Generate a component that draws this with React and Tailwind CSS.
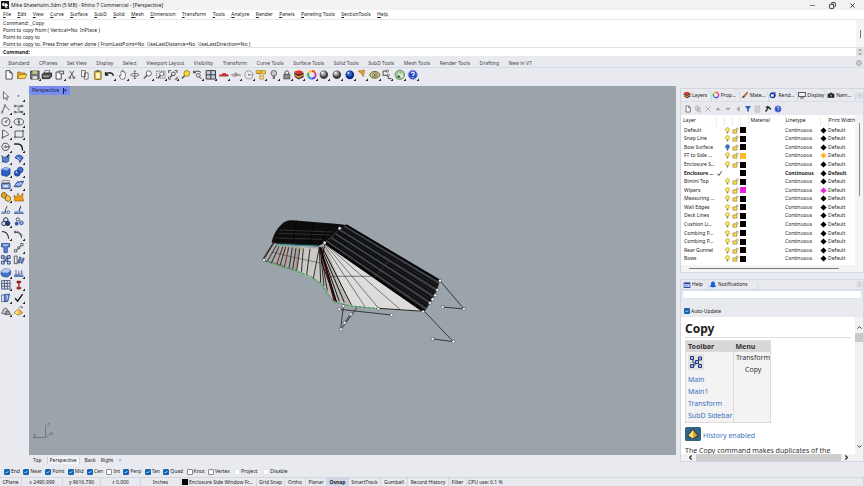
import React, { useState } from 'react';
import { Minus, Copy, X, ChevronUp, ChevronDown, ChevronLeft, ChevronRight, Settings } from 'lucide-react';

const menus = ['File', 'Edit', 'View', 'Curve', 'Surface', 'SubD', 'Solid', 'Mesh', 'Dimension', 'Transform', 'Tools', 'Analyze', 'Render', 'Panels', 'Paneling Tools', 'SectionTools', 'Help'];

const toolTabs = ['Standard', 'CPlanes', 'Set View', 'Display', 'Select', 'Viewport Layout', 'Visibility', 'Transform', 'Curve Tools', 'Surface Tools', 'Solid Tools', 'SubD Tools', 'Mesh Tools', 'Render Tools', 'Drafting', 'New in V7'];

const history = [
  'Command: _Copy',
  'Point to copy from ( Vertical=No  InPlace )',
  'Point to copy to',
  'Point to copy to. Press Enter when done ( FromLastPoint=No  UseLastDistance=No  UseLastDirection=No )',
];

const layers = [
  { name: 'Default' },
  { name: 'Snap Line' },
  { name: 'Bow Surface', off: true },
  { name: 'FT to Side ...', color: '#fbb829' },
  { name: 'Enclosure S...' },
  { name: 'Enclosure ...', current: true },
  { name: 'Bimini Top' },
  { name: 'Wipers', color: '#e81ee0' },
  { name: 'Measuring ...' },
  { name: 'Wall Edges' },
  { name: 'Deck Lines' },
  { name: 'Cushion Li...' },
  { name: 'Combing P...' },
  { name: 'Combing P...' },
  { name: 'Rear Gunnel' },
  { name: 'Bows' },
];

const osnaps = [
  ['End', true], ['Near', true], ['Point', true], ['Mid', true], ['Cen', true], ['Int', false],
  ['Perp', true], ['Tan', true], ['Quad', true], ['Knot', false], ['Vertex', false],
];

// 12x12 glyphs used by the toolbars and the panels
const glyphs = {
  page: <path d="M3 1.5h4l2.5 2.5v6.5H3zM7 1.5V4h2.5" fill="#fff" stroke="#333" strokeWidth=".9" />,
  open: <><path d="M1.5 10V3h3l1 1h4v2" fill="#e9a820" stroke="#80600c" strokeWidth=".7" /><path d="M1.5 10l2-4.5h8L9.3 10z" fill="#ffd34d" stroke="#80600c" strokeWidth=".7" /></>,
  save: <><path d="M1.5 2h9v8.5h-9z" fill="#777b78" stroke="#222" strokeWidth=".8" /><path d="M3.5 2h5v3h-5z" fill="#c9c57d" /><path d="M3.5 7.5h5v3h-5z" fill="#ddd" /></>,
  print: <><path d="M4 1.5h5L8 5H3z" fill="#fff" stroke="#333" strokeWidth=".7" /><path d="M1 5.5L3 4h8v4l-2 2H1z" fill="#555" stroke="#111" strokeWidth=".8" /><path d="M2 7.5h6" stroke="#ccc" /></>,
  props: <><path d="M2 3h5.5v7.5H2z" fill="#fff" stroke="#333" strokeWidth=".9" /><path d="M5 2h5v3H7.5L5 4z" fill="#ddd" stroke="#333" strokeWidth=".8" /></>,
  cut: <g stroke="#444" strokeWidth=".9" fill="none"><path d="M4 2l3.8 6.5M8 2L4.2 8.5" /><circle cx="3.8" cy="9" r="1" /><circle cx="8.2" cy="9" r="1" /></g>,
  copy: <g fill="#fff" stroke="#444" strokeWidth=".8"><path d="M2.5 1.5h4v6.5h-4zM5.5 4h4v6.5h-4z" /></g>,
  paste: <><rect x="2.5" y="2" width="7" height="9" rx="1" fill="#e4bb3b" stroke="#6a551b" strokeWidth=".8" /><path d="M4.2 4h3.8v5.5H4.2z" fill="#fff8cc" /><path d="M4.5 1h3v1.8h-3z" fill="#555" /></>,
  undo: <path d="M1.5 5.5C4 3 8.5 3 10 7M1.5 3v3.2h3" fill="none" stroke="#222" strokeWidth="1.5" />,
  hand: <path d="M4 10.5L2 7l1-.6L4 7.5V3c0-1 1-1 1 0V1.8c0-1 1.2-1 1.2 0v1c0-1 1.2-1 1.2 0v1c0-.9 1.2-.9 1.2 0V8l-1 2.5z" fill="#fff" stroke="#444" strokeWidth=".7" />,
  orbit: <g fill="none" stroke="#555" strokeWidth=".8"><path d="M6 1.5v9M4.8 2.8L6 1.5l1.2 1.3M4.8 9.2L6 10.5l1.2-1.3" /><ellipse cx="6" cy="6" rx="4.5" ry="1.5" /></g>,
  zoom: <g fill="none" stroke="#555" strokeWidth=".9"><circle cx="7" cy="4.5" r="2.8" fill="#f5f6ff" /><path d="M5 6.5L1.8 10" strokeWidth="1.4" /></g>,
  zoomWin: <g fill="none" stroke="#444" strokeWidth=".8"><path d="M1.5 2h9v7.5h-9z" strokeDasharray="1.3 1" /><circle cx="7" cy="5" r="2.2" fill="#fff" /><path d="M5.5 6.7L3 9.5" strokeWidth="1.3" /></g>,
  zoomExt: <g fill="none" stroke="#333" strokeWidth=".9"><path d="M1.5 4V1.5H4M8 1.5h2.5V4M10.5 8v2.5H8M4 10.5H1.5V8" /><circle cx="6.5" cy="5" r="2" /><path d="M5 6.5L3 8.7" strokeWidth="1.3" /></g>,
  zoomSel: <><circle cx="7" cy="4.5" r="3.1" fill="#f6dc35" stroke="#7a7120" strokeWidth=".8" /><path d="M4.7 7L1.8 10" stroke="#555" strokeWidth="1.5" /></>,
  viewUndo: <g fill="none" stroke="#333"><path d="M1.5 3.5c2-2 6-2 8 0M1.5 1.5v2.3h2.5" /><circle cx="6.5" cy="6.5" r="2" strokeWidth=".8" /><path d="M7.5 8l2.5 2.5" /></g>,
  four: <><path d="M1 1.5h10v9H1z" fill="#c7cdd8" stroke="#222" strokeWidth=".9" /><path d="M6 1.5v9M1 6h10" stroke="#222" strokeWidth=".9" /></>,
  car: <><path d="M.8 7c0-1.5 2-1.5 3-1.7C5 3.5 8 3.5 9 5.3c1.2.1 2.2.4 2.2 1.7z" fill="#dd2929" /><path d="M1 7.2h10" stroke="#6d1010" strokeWidth=".8" /></>,
  plane: <><path d="M1 6l4-1.2 1-1.5 1 1.5 4 1.2v1l-4-.2-2 1.5z" fill="#b7b7bb" stroke="#777" strokeWidth=".5" /><circle cx="6.5" cy="5.8" r=".9" fill="#cc4444" /></>,
  circle: <g fill="none" stroke="#777" strokeWidth=".7"><circle cx="6" cy="6" r="4.3" /><path d="M6 6h4.3" /><circle cx="6" cy="6" r=".6" fill="#777" /></g>,
  sheets: <><path d="M1 1.5h5v3H1zM6.5 1.5H11V5H6.5z" fill="#ffc928" stroke="#8a6b15" strokeWidth=".6" /><path d="M5 7h4v3.5H5z" fill="#ffe07a" stroke="#8a6b15" strokeWidth=".6" /><path d="M2 3.5l3 2.5" stroke="#b3482c" strokeWidth=".8" /></>,
  bulb: <><circle cx="6" cy="4.3" r="3" fill="#c9cacc" stroke="#4c4c4c" strokeWidth=".8" /><path d="M4.8 7.3h2.4v3H4.8z" fill="#666" /></>,
  lock: <><path d="M4 5.5V3.8c0-2.6 4-2.6 4 0v1.7" fill="none" stroke="#444" /><path d="M2.8 5.5h6.4v4.8H2.8z" fill="#8b8d90" stroke="#333" strokeWidth=".7" /></>,
  layers: <><path d="M1 3l4.5 2.2L11 3.5v5L5.5 11 1.5 8z" fill="#3c2c47" /><path d="M1 5l4.5 2.5L11 5.3v1.5L5.5 9.5 1.2 6.5z" fill="#f29b2d" /><path d="M1 2.3L7 1l4 2-5 3z" fill="#e2371f" /></>,
  wheel: <g fill="none" strokeWidth="2.2"><path d="M6 2a4 4 0 0 1 3.5 2" stroke="#f04a34" /><path d="M9.5 4a4 4 0 0 1 0 4" stroke="#e43ca4" /><path d="M9.5 8A4 4 0 0 1 6 10" stroke="#743ae0" /><path d="M6 10a4 4 0 0 1-3.5-2" stroke="#2196e0" /><path d="M2.5 8a4 4 0 0 1 0-4" stroke="#36b54a" /><path d="M2.5 4A4 4 0 0 1 6 2" stroke="#f6c623" /></g>,
  sphere: <><circle cx="6" cy="6" r="4.5" fill="#3f4142" /><circle cx="5.3" cy="4.6" r="2.9" fill="#999" /><circle cx="4.7" cy="4" r="1.3" fill="#f4f4f4" /></>,
  blueSphere: <><circle cx="6" cy="6" r="4.6" fill="#0d2b84" /><circle cx="5.3" cy="4.8" r="2.9" fill="#2f63c8" /><circle cx="4.5" cy="4" r="1.1" fill="#d9e8ff" /></>,
  cone: <path d="M2 2l7-1-1.5 7-2-3.5z" fill="#f49b28" stroke="#8d5512" strokeWidth=".5" />,
  eye: <><ellipse cx="6" cy="6" rx="5.2" ry="3.6" fill="#d9c96c" stroke="#55501c" strokeWidth=".9" /><circle cx="6" cy="6" r="2.2" fill="#fff" stroke="#333" strokeWidth=".7" /><circle cx="6" cy="6" r=".9" /></>,
  flow: <g fill="none" stroke="#333" strokeWidth=".9"><path d="M6 2H2v4.5h5.5V10H11" /><path d="M5.5 1h2v2h-2zM6.5 5.5h2v2h-2z" fill="#fff" strokeWidth=".6" /></g>,
  globe: <><circle cx="6" cy="6" r="5" fill="#9cc78f" stroke="#4b6e48" strokeWidth=".7" /><path d="M2 9l3-6 1.5 3L9 3.5 9.5 9z" fill="#dbe9d3" /><path d="M2 9l3-3 2 3z" fill="#3c5b3a" /></>,
  help: <><circle cx="6" cy="6" r="4.8" fill="#2d4dc6" stroke="#8295dd" strokeWidth=".8" /><path d="M4.5 4.7c0-2.2 3.3-2 3.1 0C7.5 6 6 5.8 6 7.3M6 8.4v1" fill="none" stroke="#fff" strokeWidth="1.1" /></>,

  pointer: <path d="M3.5 1.5v7.8l1.9-1.6 1.3 2.8 1.2-.6-1.3-2.6H9z" fill="#fff" stroke="#333" strokeWidth=".7" />,
  point: <circle cx="5.5" cy="6" r="1" fill="#777" />,
  polyline: <g fill="none" stroke="#333" strokeWidth=".8"><path d="M2 10L5 2.5l5 5" /><path d="M1.3 9h1.6v1.6H1.3zM4.2 1.5h1.6v1.6H4.2z" fill="#fff" strokeWidth=".5" /></g>,
  ctrl: <g fill="none" stroke="#333" strokeWidth=".7"><path d="M2 3h7.5C4 4 4 8 9.5 9.5H2" /><path d="M1.2 2.2h1.6v1.6H1.2zM8.7 2.2h1.6v1.6H8.7zM1.2 8.7h1.6v1.6H1.2zM8.7 8.7h1.6v1.6H8.7z" fill="#fff" /></g>,
  radius: <g fill="none" stroke="#333" strokeWidth=".8"><circle cx="6" cy="6" r="4.3" /><path d="M6 6l3-3" /><circle cx="6" cy="6" r=".7" fill="#fff" /></g>,
  ellipse: <g fill="none" stroke="#333" strokeWidth=".8"><ellipse cx="6" cy="6" rx="5" ry="3.4" /><path d="M6 2.6v6.8" /><circle cx="6" cy="6" r=".8" fill="#fff" /></g>,
  arc: <g fill="none" stroke="#333" strokeWidth=".8"><path d="M2.5 2c5 1 6 4 6.5 5L2.5 10z" /><circle cx="2.5" cy="10" r=".8" fill="#fff" /></g>,
  rect: <g fill="none" stroke="#333" strokeWidth=".8"><path d="M2 3h8.5v6.5H2z" /><path d="M1.2 8.8h1.5v1.5H1.2zM9.8 2.2h1.5v1.5H9.8z" fill="#fff" strokeWidth=".6" /></g>,
  polygon: <g fill="none" stroke="#333" strokeWidth=".8"><path d="M3.5 2.3h4L10 6 7.5 9.7h-4L1.5 6z" /><circle cx="5.7" cy="6" r="1" /><path d="M6.7 6H10" /></g>,
  fillet: <path d="M1 3h3.5C8 3 10 5 10 10" fill="none" stroke="#222" strokeWidth="1.5" />,
  surf: <><path d="M2 3.5l3 1 4.5-3L9 8.5 6.5 10 2.5 9z" fill="#5680d4" stroke="#20386f" strokeWidth=".7" /><path d="M1 2l2 2M9 1l-2 4M2 10l2-2" stroke="#222" strokeWidth=".7" /></>,
  loft: <><path d="M2 5c1-4 7-4 8.5 0L7 10C7 7 5 6 2 5z" fill="#4f7bd5" stroke="#20386f" strokeWidth=".8" /><path d="M4.5 4.5L7 7" stroke="#e5eeff" /></>,
  box: <><path d="M1.5 3.5L5 1.5l5.5 1v6L7 11l-5.5-1.5z" fill="#2860c8" stroke="#12326f" strokeWidth=".6" /><path d="M1.5 3.5L5 1.5l5.5 1L7 4.5z" fill="#93b6f2" /></>,
  balls: <><circle cx="7.5" cy="4" r="3" fill="#3f70cf" stroke="#142f6e" strokeWidth=".7" /><circle cx="4.3" cy="7.4" r="3.2" fill="#2659ba" stroke="#142f6e" strokeWidth=".7" /><circle cx="3.5" cy="6.4" r="1" fill="#bcd1fb" /></>,
  drum: <><ellipse cx="6" cy="2.5" rx="4.5" ry="1.3" fill="none" stroke="#444" strokeWidth=".6" /><path d="M1.5 4.5h9v5.5h-9z" fill="#80a0df" stroke="#20386f" strokeWidth=".8" /><path d="M3.5 6.5h5v2h-5z" fill="#e1eafd" /></>,
  sheet: <><path d="M1 8l3-5 7-1-3 6z" fill="#5a82d2" stroke="#20386f" strokeWidth=".8" /><path d="M4 3.5l2.5 4M7 2.5l1.5 4M2.5 6l7-1.5" stroke="#dbe6ff" strokeWidth=".7" /></>,
  bool: <><path d="M1.5 2.5L4 1l3 2v3L4.5 7.5 1.5 6z" fill="#e3a51d" stroke="#6d4e0d" strokeWidth=".8" /><path d="M5.5 6L8 4.5l3 2v3L8.5 11l-3-1.5z" fill="#ffc744" stroke="#6d4e0d" strokeWidth=".8" /></>,
  burst: <path d="M1.5 10.5L1 4l2.5 3L5 2l1.5 4L10.5 2 10 6l1 4.5z" fill="#f59c15" stroke="#8a520a" strokeWidth=".6" />,
  trim: <><path d="M1 9.5h4.5V6l2-4" fill="none" stroke="#333" strokeWidth=".9" /><path d="M2 7.5h3v2H2z" fill="#7c9be0" /><circle cx="8.5" cy="8.5" r="1.5" fill="#fff" stroke="#2c50a0" /></>,
  split: <><path d="M1 9.5h10M6 8l2-6" stroke="#244288" strokeWidth="1.2" fill="none" /><path d="M1.5 7.5h4v1.5h-4zM7.5 7.5H10V9H7.5z" fill="#6f93e0" /></>,
  join: <g fill="#dce2ed" stroke="#1c2c54"><circle cx="6" cy="4" r="2.4" /><circle cx="4" cy="7.7" r="2.3" /><circle cx="8" cy="7.7" r="2.3" fill="#27407e" /></g>,
  dots: <g strokeWidth=".8"><circle cx="5" cy="3.5" r="1.8" fill="#dbe2f2" stroke="#333" /><circle cx="3.7" cy="8" r="2" fill="#3158a9" /><circle cx="8.7" cy="7" r="2" fill="#93b0ea" stroke="#20386f" /></g>,
  arcA: <path d="M2 2.5c4 0 6.5 3 7 7.5" fill="none" stroke="#222" strokeWidth="1.2" />,
  arcB: <g fill="none" stroke="#222"><path d="M2 3c4 0 6.5 3 7 6" strokeWidth="1.1" /><path d="M4 1.5l6 5M1.2 2.2h1.6v1.6H1.2z" strokeWidth=".6" /></g>,
  pipe: <><path d="M1.5 1.5h8.5V5H7.5v6H4V5H1.5z" fill="#5f88d7" stroke="#1d3877" strokeWidth=".8" /><path d="M3 3h5.5" stroke="#dbe7ff" /></>,
  nodes: <g fill="#fff" stroke="#333" strokeWidth=".8"><path d="M2.5 9.5l7-7" /><path d="M1.3 8h2.5v2.5H1.3zM8 1.3h2.5v2.5H8zM5 5h2v2H5z" /></g>,
  array: <g fill="#aebfe9" stroke="#1c356e" strokeWidth=".8"><path d="M3 3h4v3H4v3" fill="none" /><path d="M1.3 1.5h3v3h-3zM7.7 1.5h3v3h-3zM1.3 7.5h3v3h-3zM7.7 7.5h3v3h-3zM5.5 5h2.500v2.500H5.500z" /></g>,
  flowAlong: <g strokeWidth=".8" stroke="#333"><path d="M1.2 2h3v8h-3z" fill="#eee" /><path d="M5 9l2-6 1.5.5-2 6zM8 9l2.5-5 1.2.7L9.5 10z" fill="#87a7e8" stroke="#20386f" /></g>,
  solid: <><path d="M1 4.5L4 2h5l2 1.5v4L8 10.5 3 10 1 8z" fill="#3f72cc" stroke="#16336f" strokeWidth=".7" /><path d="M1 4.5L4 2h5l2 1.5L8 6H3z" fill="#b5caef" /></>,
  extrude: <><path d="M1 8.5h10v1.8H1z" fill="#3f6bc5" /><path d="M3 7V3M6 7V4M9 7V3" stroke="#315aa9" strokeWidth=".9" /><path d="M1.5 8l9-1" stroke="#222" strokeWidth=".6" /></>,
  mesh: <path d="M1.5 1.5h9v9h-9zM4.5 1.5v9M7.5 1.5v9M1.5 4.5h9M1.5 7.5h9" fill="none" stroke="#29396a" strokeWidth=".8" />,
  dim: <><path d="M4 2h4v2H4zM4 8.5h4v2H4z" fill="#b42626" stroke="#6b1111" strokeWidth=".6" /><path d="M6 4v4.5" stroke="#c83232" strokeWidth="1.6" /></>,
  cards: <g stroke="#20386f" strokeWidth=".7"><path d="M1.5 3h4v7h-4z" fill="#dfe8fa" /><path d="M4.5 2.5L10 2 8 10H4.5z" fill="#5a83d4" /><path d="M6 4l2-.2L7 8" fill="none" stroke="#fff" /></g>,
  check: <path d="M2 6.5L4.7 9.5 10 2" fill="none" stroke="#111" strokeWidth="1.4" />,
  rocks: <g stroke="#444" strokeWidth=".7"><path d="M1.5 9l2-5 3-1 2 3v3z" fill="#c5c8cd" /><path d="M5 10l1.5-4 3 .5L11 10z" fill="#999da3" /></g>,
  pyramid: <><path d="M1 8L5.5 4 10 8l-4.5 2.5z" fill="#f3b52c" stroke="#7c5708" strokeWidth=".7" /><path d="M5.5 4.3V10L1.5 8z" fill="#ffe08a" /><path d="M6 2.5c1.5-1.5 3-1 4 0M9 1l1 1.7-1.8.5" fill="none" stroke="#555" strokeWidth=".7" /></>,

  cross: <path d="M2 2l8 8M10 2l-8 8" stroke="#a5a7ab" strokeWidth="1.2" />,
  up: <path d="M6 3.5L10.5 8h-9z" fill="#a5a7ab" />,
  down: <path d="M6 8.5L10.5 4h-9z" fill="#a5a7ab" />,
  left: <path d="M3.5 6L8.5 1.5v9z" fill="#a5a7ab" />,
  funnel: <path d="M1.5 1.5h9L7.2 6v4.8L4.8 9V6z" fill="#2860ba" />,
  newSub: <g fill="#dfe0e2" stroke="#999" strokeWidth=".8"><path d="M2.5 1.5h4v6.5h-4zM5.5 4h4v6.5h-4z" /></g>,
  hammer: <path d="M1.5 3.5L5.5 1l3 1.5 2.5 4-1.5 1L7 5 3.5 10.5 1.5 9.5 4.5 4.5z" fill="#333" />,
  list: <><path d="M2 1.5h6.5v9H2z" fill="#eee" stroke="#999" strokeWidth=".8" /><path d="M3.5 4H7M3.5 6H7M3.5 8H7" stroke="#888" strokeWidth=".8" /></>,
  brush: <><path d="M4.5 6.5L9 1.3l1.5 1.2L6.5 8z" fill="#d08954" stroke="#5a321a" strokeWidth=".6" /><path d="M2 10.5c0-3 1.5-4 3-3.5s1.5 3-3 3.5z" fill="#7d3d29" /></>,
  render: <><circle cx="5.5" cy="6.5" r="4.5" fill="#193c9c" /><path d="M3 5h4v3.5H3z" fill="#fff" /><path d="M6 2l4-1v4z" fill="#5c84db" /></>,
  monitor: <><rect x="1" y="2" width="10" height="6.5" fill="#eef" stroke="#222" strokeWidth="1.1" /><path d="M3.5 10.5h5" stroke="#222" strokeWidth="1.2" /></>,
  camera: <><path d="M1 4h2.5L4.5 2.5h3L8.5 4H11v6H1z" fill="#222" /><circle cx="6" cy="7" r="1.7" fill="#777" /></>,
  helpWin: <><path d="M1 2h10v8.5H1z" fill="#2d49a6" /><path d="M2 4.5h8V9H2z" fill="#c9d6f5" /><path d="M3.5 6h5M3.5 7.5h3" stroke="#2d49a6" strokeWidth=".8" /></>,
  bell: <path d="M6 .8C3.2.8 3 3.5 3 5.5L1.2 9h9.6L9 5.5C9 3.5 8.8.8 6 .8zM4.5 9.6h3L6 11z" fill="#1266d8" />,
  layerOn: <><circle cx="6" cy="4.5" r="3.4" fill="#ffec6b" stroke="#b58d12" /><path d="M4.7 8h2.6v3H4.7z" fill="#8f7b3a" /></>,
  layerOff: <><circle cx="6" cy="4.5" r="3.4" fill="#3f78cf" stroke="#274b8e" /><path d="M4.7 8h2.6v3H4.7z" fill="#3b4e75" /></>,
  unlocked: <><path d="M7 5V3.3c0-2 3.5-2 3.5 0V5" fill="none" stroke="#8a6d1b" strokeWidth="1.1" /><path d="M1.5 5h7v5.5h-7z" fill="#ffe04f" stroke="#8a6d1b" /></>,
};

const standardBar = ['page', 'open', 'save', 'print', 'props', 'cut', 'copy', 'paste', 'undo', 'hand', 'orbit', 'zoom', 'zoomWin', 'zoomExt', 'zoomSel', 'viewUndo', 'four', 'car', 'plane', 'circle', 'sheets', 'bulb', 'lock', 'layers', 'wheel', 'sphere', 'sphere', 'blueSphere', 'cone', 'eye', 'flow', 'globe', 'help'];
const noFlyout = ['page', 'open', 'print', 'cut', 'copy', 'paste', 'orbit', 'pointer', 'trim', 'split', 'dots', 'pipe', 'array', 'flowAlong', 'burst', 'zoomSel'];

const sideBar = [
  'pointer', 'point', 'polyline', 'ctrl', 'radius', 'ellipse', 'arc', 'rect', 'polygon', 'fillet', 'surf', 'loft',
  'box', 'balls', 'drum', 'sheet', 'bool', 'burst', 'trim', 'split', 'join', 'dots', 'arcA', 'arcB',
  'pipe', 'nodes', 'array', 'flowAlong', 'solid', 'extrude', 'mesh', 'dim', 'cards', 'check', 'rocks', 'pyramid',
];

const Glyph = ({ name, className = 'w-3 h-3' }) => (
  <svg viewBox="0 0 12 12" className={`shrink-0 ${className}`} aria-hidden="true">
    {glyphs[name]}
  </svg>
);

const ToolButton = ({ name }) => (
  <button aria-label={name} className="flex items-center justify-center">
    <svg viewBox="0 0 12 12" className="w-3 h-3">
      <g transform="translate(.2 .2) scale(.94)">{glyphs[name]}</g>
      {!noFlyout.includes(name) && <path d="M12 9.5V12H9.5z" fill="#222" />}
    </svg>
  </button>
);

const TitleBar = () => (
  <header className="flex h-[10px] items-center justify-between bg-[#f2f2f2] pl-px pr-2">
    <div className="flex items-center gap-0.5">
      <svg viewBox="0 0 12 12" className="h-2 w-2">
        <path d="M0 0h12v12H0z" fill="#111" />
        <path d="M1 5l3-3 1 2 3-1 3 4-2 1 1 3-3-1-2-3-2 1z" fill="#fff" />
        <path d="M4 5l2 1M8 8l2 3" stroke="#111" />
      </svg>
      <span>Mike Shateholm.3dm (5 MB) - Rhino 7 Commercial - [Perspective]</span>
    </div>
    <div className="flex gap-[13px]">
      <button aria-label="Minimize"><Minus className="h-[7px] w-[7px]" /></button>
      <button aria-label="Restore"><Copy className="h-[7px] w-[7px] -scale-x-100" strokeWidth={3} /></button>
      <button aria-label="Close"><X className="h-[7px] w-[7px]" strokeWidth={3} /></button>
    </div>
  </header>
);

const CommandArea = () => {
  const [command, setCommand] = useState('');
  return (
    <section className="border-t border-[#e6e7ec] bg-white">
      <div className="flex h-[27px] justify-between">
        <div className="whitespace-pre pl-[3px] text-[#222]">
          {history.map((line) => (
            <p key={line} className="h-[7px] leading-[7px]">{line}</p>
          ))}
        </div>
        <div className="flex w-2 items-center justify-center bg-[#f4f4f5]">
          <span className="h-2 w-px bg-[#777]" />
        </div>
      </div>
      <div className="flex h-[9px] items-center border-t border-[#e1e2e8] pl-[3px]">
        <label htmlFor="command" className="font-bold">Command:</label>
        <input id="command" autoFocus value={command} onChange={(e) => setCommand(e.target.value)} className="ml-px h-[7px] min-w-0 flex-1 outline-none" />
        <button aria-label="Command history" className="flex h-2 w-2 flex-col items-center justify-center bg-[#e2e3e7]">
          <ChevronUp className="h-1 w-1.5" strokeWidth={4} />
          <ChevronDown className="h-1 w-1.5" strokeWidth={4} />
        </button>
      </div>
    </section>
  );
};

const Toolbars = () => (
  <section className="h-[30px] pt-[3px]">
    <div className="flex h-[9px] items-center border-b border-[#d4dbe4] pr-0.5">
      <div className="ml-2 flex w-[524px] justify-between text-[#444]">
        {toolTabs.map((tab) => (
          <button key={tab} className="whitespace-nowrap">{tab}</button>
        ))}
      </div>
      <button aria-label="Toolbar options" className="ml-auto h-[6px] w-[6px] rounded-full border border-[#aaa] bg-[#ccc]" />
    </div>
    <div className="ml-[3px] grid h-[13px] w-[416px] grid-cols-[repeat(33,minmax(0,1fr))]">
      {standardBar.map((name, i) => <ToolButton key={i} name={name} />)}
    </div>
  </section>
);

// Enclosure model, drawn in a 3x local space
const Model = () => {
  const bands = [0, 1, 2, 3, 4, 5, 6, 7, 8, 9, 10, 11, 12, 13, 14];
  return (
    <g transform="translate(250 210) scale(.3333)" strokeLinejoin="round">
      <path d="M72 98L40 150 78 163 142 183 212 218 212 108z" fill="#aaa9a7" />
      <path d="M150 112l58 4 4 100-72-33z" fill="#cbc9c5" />
      <path d="M210 112L225 98 522 305 385 295 300 287 252 276 210 214z" fill="#bbb9b6" />
      <path d="M225 102L522 305 385 295 300 286z" fill="#dddcda" />
      <path d="M65 96C70 75 82 52 100 38 108 33 116 30 126 31L265 42 288 45 226 98 206 107 150 103 80 100z" fill="#0c0c0d" />
      <path d="M74 84L218 88M88 60L250 66M84 70L240 75" stroke="#555" strokeWidth="1.5" />
      <path d="M140 32L128 100M190 37L180 103M245 41L210 100" stroke="#000" strokeWidth="2" />
      <path d="M288 45L570 212 562 240 543 277 524 304 225 98z" fill="#2a2c30" />
      {bands.map((i) => (
        <path
          key={i}
          d={`M${288 - i * 4.4} ${45 + i * 3.8}L${570 - i * 3.2} ${212 + i * 6.5}`}
          stroke={i % 3 === 1 ? '#5b5e65' : '#08090a'}
          strokeWidth={i % 3 === 1 ? 2 : 4}
        />
      ))}
      <path d="M225 98L522 304" stroke="#050505" strokeWidth="8" />
      <path d="M288 45L570 212" stroke="#050505" strokeWidth="5" />
      <path d="M270 54l-45 44M418 150l-42 50" stroke="#555" strokeWidth="1.5" />
      <path d="M66 96l14 3 126 8" stroke="#222" strokeWidth="5" fill="none" />
      <path d="M82 104l122 4" stroke="#2d9ca5" strokeWidth="3" />
      <path d="M72 98L42 148M80 105L52 154M88 108L64 159M98 110L80 164M107 111L90 167M116 112L103 172M127 113L117 176M138 114L128 179M150 115L140 183M160 115l-6 72M180 116l-10 78M208 112l-18 94M208 112l4 106M210 112l12 116M210 112l22 130M70 98l-32 50" stroke="#111" strokeWidth="2.5" />
      <path d="M65 126l70 17 75 16M40 150l60 17" stroke="#333" strokeWidth="1.5" fill="none" />
      <path d="M115 118l-10 50M145 118l-8 62M100 113l-20 48" stroke="#d25c3a" strokeWidth="1.5" />
      <path d="M211 114L254 274" stroke="#650c18" strokeWidth="6" />
      <path d="M210 112l58 162M213 112l70 165M216 110l88 175M224 104l-10 50 44 120" stroke="#111" strokeWidth="3" fill="none" />
      <path d="M222 104L345 290M225 102L386 295M225 101L450 298M238 199h135" stroke="#333" strokeWidth="1.8" fill="none" />
      <path d="M210 112l50 165" stroke="#000" strokeWidth="3" />
      <path d="M45 154l33 10 62 19 45 18 28 20 20 30 20 25 50 12 82 8" stroke="#279b3c" strokeWidth="3" strokeDasharray="9 4" fill="none" />
      <path d="M385 295l137 9" stroke="#222" strokeWidth="3" />
      <path d="M570 212l72 85-64-6M524 305l86 90-62-8M268 298l157 17M273 358l48-65M280 290l-8 68M284 338l18-26" stroke="#222" strokeWidth="2.5" fill="none" />
      <g fill="#fff" stroke="#333" strokeWidth="1.5">
        {[[570, 212], [642, 297], [578, 291], [610, 395], [548, 387], [425, 315], [268, 298], [273, 358], [284, 338], [302, 313], [224, 98], [519, 305], [385, 296], [562, 240], [556, 256], [548, 268], [540, 279], [280, 288], [42, 150], [269, 55]].map(([x, y]) => (
          <circle key={`${x}-${y}`} cx={x} cy={y} r="4.5" />
        ))}
      </g>
      <path d="M88 110h4M152 115h5M75 164h3M215 221h3" stroke="#85e646" strokeWidth="5" />
    </g>
  );
};

const Viewport = () => (
  <main className="flex min-w-0 flex-1 flex-col">
    <div className="relative min-h-0 flex-1 overflow-hidden bg-[#9ca4ab]">
      <svg viewBox="29 86 647 369" preserveAspectRatio="xMinYMin meet" className="block h-full w-full" role="img" aria-label="Perspective view">
        <Model />
        <path d="M33 437.5h12.5v-13M45.5 437.5l5-4" fill="none" stroke="#68727c" strokeWidth=".8" />
        <g fill="#5f6871" fontSize="6">
          <text x="33" y="437">y</text>
          <text x="47" y="426">z</text>
          <text x="50" y="435">x</text>
        </g>
      </svg>
      <button className="absolute left-0 top-0 flex h-[9px] w-[41px] items-center gap-0.5 bg-[#788cec] pl-[3px] text-[#14204c]">
        Perspective <span className="ml-0.5 h-1.5 border-l border-[#14204c]" /><span className="-ml-0.5">▾</span>
      </button>
    </div>
    <div className="flex h-[11px] items-center gap-[5px] pl-1">
      <button>Top</button>
      <button className="border-x border-[#d0d2d9] bg-[#f3f4f7] px-0.5">Perspective</button>
      <button>Back</button>
      <button>Right</button>
      <button aria-label="New viewport" className="text-[#777]">✧</button>
    </div>
  </main>
);

const panelTabs = [['layers', 'Layers'], ['wheel', 'Prop...'], ['brush', 'Mate...'], ['render', 'Rend...'], ['monitor', 'Display'], ['camera', 'Nam...']];

const LayersPanel = () => (
  <section className="border border-[#d3d6de]">
    <div className="flex h-[12px] items-center pl-0.5">
      {panelTabs.map(([icon, label]) => (
        <button key={label} className="flex h-full min-w-0 flex-1 items-center gap-px whitespace-nowrap rounded-tr-lg border-r border-[#cdd2df]">
          <Glyph name={icon} className="h-2 w-2" />
          {label}
        </button>
      ))}
      <Settings className="h-[7px] w-[7px] text-[#bbb]" />
    </div>
    <div className="flex h-[14px] items-center gap-[2px] border-t border-[#dbdee6] pl-[3px]">
      {['page', 'newSub', 'cross', 'up', 'down', 'left', 'funnel', 'list', 'hammer', 'help'].map((icon) => (
        <button key={icon} aria-label={icon}><Glyph name={icon} className="h-2 w-2" /></button>
      ))}
    </div>
    <div className="flex bg-[#f4f4f5]">
      <div className="h-[150px] w-[174px] shrink-0 bg-white">
        <table className="h-[148px] w-full table-fixed border-collapse text-[#222]">
          <thead>
            <tr className="h-[11px] text-left [&>th]:p-0 [&>th]:font-normal [&>th]:whitespace-nowrap">
              <th className="w-[35px]"><span className="pl-0.5">Layer</span></th>
              <th className="w-2 border-x border-[#eee]" />
              <th className="w-2 border-x border-[#eee]" />
              <th className="w-2 border-x border-[#eee]" />
              <th className="w-2 border-x border-[#eee]" />
              <th className="w-[37px] border-r border-[#eee]"><span className="pl-0.5">Material</span></th>
              <th className="w-[35px]">Linetype</th>
              <th className="w-2 border-x border-[#eee]" />
              <th>Print Width</th>
            </tr>
          </thead>
          <tbody>
            {layers.map((layer, i) => (
              <tr key={i} className={`[&>td]:p-0 [&>td]:whitespace-nowrap ${layer.current ? 'font-bold' : ''}`}>
                <td><span className="pl-[3px]">{layer.name}</span></td>
                <td>{layer.current && <Glyph name="check" className="h-[7px] w-[7px]" />}</td>
                <td>{!layer.current && <Glyph name={layer.off ? 'layerOff' : 'layerOn'} className="h-[7px] w-[7px]" />}</td>
                <td>{!layer.current && <Glyph name="unlocked" className="h-[7px] w-[7px]" />}</td>
                <td><div className="h-[6px] w-[6px] bg-black" style={{ background: layer.color }} /></td>
                <td />
                <td>Continuous</td>
                <td>
                  <svg viewBox="0 0 8 8" className="h-[7px] w-[7px]"><path d="M4 .5L7.5 4 4 7.5.5 4z" fill={layer.color || '#000'} /></svg>
                </td>
                <td>Default</td>
              </tr>
            ))}
          </tbody>
        </table>
      </div>
      <div className="flex flex-1 justify-center pt-2">
        <span className="h-[73px] w-px bg-[#888]" />
      </div>
    </div>
    <div className="flex h-[7px] items-center bg-[#f4f4f5] pl-2 pr-6">
      <span className="h-px w-full bg-[#777]" />
    </div>
  </section>
);

const HelpPanel = () => (
  <section className="mt-[6px] flex min-h-0 flex-1 flex-col border border-[#d3d6de]">
    <div className="flex h-[10px] shrink-0 items-center border-b border-[#d3dae6] pl-0.5">
      <button className="flex h-full w-[26px] items-center gap-px rounded-tr-lg border-r border-[#cdd2df]">
        <Glyph name="helpWin" className="h-2 w-2" />Help
      </button>
      <button className="flex h-full w-[50px] items-center gap-px rounded-tr-lg border-r border-[#cdd2df]">
        <Glyph name="bell" className="h-2 w-2" />Notifications
      </button>
      <Settings className="ml-auto h-[7px] w-[7px] text-[#bbb]" />
    </div>
    <input aria-label="Search help" className="mx-px h-[9px] shrink-0 border border-[#dde3ec] bg-white" />
    <div className="flex h-[18px] shrink-0 items-center pl-[3px] pt-1.5">
      <Check label="Auto-Update" defaultChecked />
    </div>
    <div className="flex min-h-0 flex-1">
      <article className="min-w-0 flex-1 overflow-hidden bg-white pl-1 pr-1 text-[7px] leading-[11px] text-[#333]">
        <h1 className="mt-1 h-[17px] border-b border-[#ddd] text-[12px] font-bold leading-[16px] text-[#222]">Copy</h1>
        <table className="mt-[2px] border-collapse border border-[#ddd] bg-[#f3f3f3]">
          <thead>
            <tr className="bg-[#d8d8d8] text-left">
              <th className="w-12 p-0 pl-0.5">Toolbar</th>
              <th className="w-9 p-0 pl-0.5">Menu</th>
            </tr>
          </thead>
          <tbody>
            <tr className="align-top">
              <td className="border-r border-[#ddd] p-0 pl-0.5">
                <div className="mb-1 mt-[2px] flex h-4 w-4 items-center justify-center bg-[#e2e2e2]">
                  <svg viewBox="0 0 14 14" className="h-[14px] w-[14px]" fill="#a9b8ee" stroke="#23356f">
                    <path d="M4 3v5h5M5 11l3-4" fill="none" />
                    <path d="M1.5 1.5h3v3h-3zM9.5 2h3v3h-3zM1.5 9.5h3v3h-3zM9.5 9.5h3v3h-3zM6.5 5.5h3v3h-3z" />
                  </svg>
                </div>
                {['Main', 'Main1', 'Transform', 'SubD Sidebar'].map((link) => (
                  <a key={link} href="#" className="block whitespace-nowrap leading-[12px] text-[#3c72c0]">{link}</a>
                ))}
              </td>
              <td className="p-0 pl-0.5 leading-[12px]">
                Transform
                <div className="pl-[9px]">Copy</div>
              </td>
            </tr>
          </tbody>
        </table>
        <p className="mt-1 flex items-end gap-0.5">
          <svg viewBox="0 0 16 14" className="h-[14px] w-4">
            <rect width="16" height="14" rx="1.5" fill="#336582" />
            <path d="M2 9l6-7 6 7-6 3z" fill="#16364b" />
            <path d="M3.5 8.5L8 3l4.5 5.5L8 11.5z" fill="#e0a526" />
            <path d="M8 3v8.5L3.5 8.5z" fill="#ffe17c" />
          </svg>
          <a href="#" className="text-[#3c72c0]">History enabled</a>
        </p>
        <p className="mt-1 whitespace-nowrap">The Copy command makes duplicates of the</p>
      </article>
      <div className="flex w-2 flex-col items-center bg-[#f1f1f1] pb-1 pt-[7px]">
        <ChevronUp className="h-[7px] w-[7px]" strokeWidth={3} />
        <span className="mt-0.5 h-[9px] w-full bg-[#c9c9c9]" />
        <ChevronDown className="mt-auto h-[7px] w-[7px]" strokeWidth={3} />
      </div>
    </div>
    <div className="flex h-[7px] shrink-0 items-center bg-[#f1f1f1] pl-1.5 pr-[13px]">
      <ChevronLeft className="h-[7px] w-[7px]" strokeWidth={4} />
      <span className="mx-0.5 h-full flex-1 bg-[#cdcdcd]" />
      <ChevronRight className="h-[7px] w-[7px]" strokeWidth={4} />
    </div>
  </section>
);

const Check = ({ label, defaultChecked, faint }) => (
  <label className="flex items-center gap-px whitespace-nowrap">
    <span className="relative flex h-[6px] w-[6px]">
      <input
        type="checkbox"
        defaultChecked={defaultChecked}
        className={`peer h-[6px] w-[6px] appearance-none rounded-[1px] border bg-white checked:border-[#1464b4] checked:bg-[#1464b4] ${faint ? 'border-[#e2e3e6]' : 'border-[#888]'}`}
      />
      <svg viewBox="0 0 6 6" className="pointer-events-none absolute inset-0 hidden peer-checked:block">
        <path d="M1.5 3l1 1 2-2" fill="none" stroke="#fff" strokeWidth=".7" />
      </svg>
    </span>
    {label}
  </label>
);

const StatusBar = () => (
  <footer className="flex h-[9px] items-center border-t border-[#d5d7de] text-center [&>*]:h-full [&>*]:whitespace-nowrap [&>*]:border-r [&>*]:border-[#d5d7de] [&>*]:leading-[8px]">
    <button className="w-[22px]">CPlane</button>
    <span className="w-[41px]">x 2490.999</span>
    <span className="w-[38px]">y 9616.790</span>
    <span className="w-[40px]">z 0.000</span>
    <span className="w-[40px]">Inches</span>
    <button className="flex w-[76px] items-center gap-px pl-px">
      <span className="h-[6px] w-[6px] bg-black" />
      Enclosure Side Window Fr...
    </button>
    <button className="w-[28px]">Grid Snap</button>
    <button className="w-[21px]">Ortho</button>
    <button className="w-[21px]">Planar</button>
    <button className="w-[22px] bg-[#cfd6ec] font-bold">Osnap</button>
    <button className="w-[32px]">SmartTrack</button>
    <button className="w-[27px]">Gumball</button>
    <button className="w-[41px]">Record History</button>
    <button className="w-[18px]">Filter</button>
    <span className="flex-1 pl-px text-left">CPU use: 0.1 %</span>
  </footer>
);

export default function App() {
  return (
    <div className="flex h-screen flex-col overflow-hidden bg-[#e9eaef] font-['Noto_Sans','Open_Sans',sans-serif] text-[5px] leading-[7px] text-[#222]">
      <TitleBar />
      <nav className="h-[9px] shrink-0 bg-white pl-[3px] pt-px">
        <div className="flex w-[385px] items-center justify-between">
          {menus.map((menu) => (
            <button key={menu} className="whitespace-nowrap"><span className="underline">{menu[0]}</span>{menu.slice(1)}</button>
          ))}
        </div>
      </nav>
      <CommandArea />
      <Toolbars />
      <div className="flex min-h-0 flex-1">
        <aside className="w-[29px] shrink-0 pt-1">
          <div className="grid h-[227px] w-[25px] grid-cols-2 grid-rows-[repeat(18,minmax(0,1fr))]">
            {sideBar.map((name) => <ToolButton key={name} name={name} />)}
          </div>
        </aside>
        <Viewport />
        <aside className="ml-1 flex w-[184px] shrink-0 flex-col pb-1 pt-[2px]">
          <LayersPanel />
          <HelpPanel />
        </aside>
      </div>
      <div className="flex h-[11px] shrink-0 items-center gap-1 pl-1">
        <div className="flex w-[226px] justify-between">
          {osnaps.map(([label, on]) => <Check key={label} label={label} defaultChecked={on} />)}
        </div>
        <div className="flex gap-[6px]">
          <Check label="Project" faint />
          <Check label="Disable" faint />
        </div>
      </div>
      <StatusBar />
    </div>
  );
}
